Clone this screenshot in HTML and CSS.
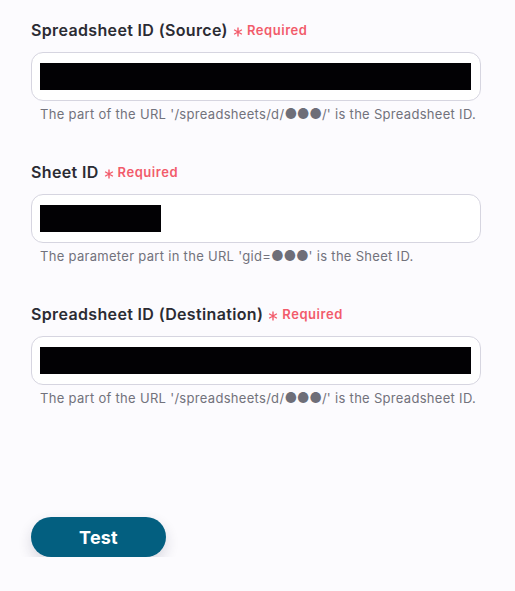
FILE: index.html
```html
<!DOCTYPE html>
<html lang="en">
<head>
<meta charset="utf-8">
<link rel="stylesheet" href="styles.css">
</head>
<body>
<main class="form">
  <section class="field">
    <div class="label">Spreadsheet ID (Source) <span class="req"><svg class="star" viewBox="0 0 10 10"><path d="M5 0.5V9.5M1.1 2.75L8.9 7.25M1.1 7.25L8.9 2.75"/></svg>Required</span></div>
    <div class="input"><div class="redact redact-long"></div></div>
    <p class="help">The part of the URL '/spreadsheets/d/<span class="dots">●●●</span>/' is the Spreadsheet ID.</p>
  </section>
  <section class="field">
    <div class="label">Sheet ID <span class="req"><svg class="star" viewBox="0 0 10 10"><path d="M5 0.5V9.5M1.1 2.75L8.9 7.25M1.1 7.25L8.9 2.75"/></svg>Required</span></div>
    <div class="input"><div class="redact redact-short"></div></div>
    <p class="help">The parameter part in the URL 'gid=<span class="dots">●●●</span>' is the Sheet ID.</p>
  </section>
  <section class="field">
    <div class="label">Spreadsheet ID (Destination) <span class="req"><svg class="star" viewBox="0 0 10 10"><path d="M5 0.5V9.5M1.1 2.75L8.9 7.25M1.1 7.25L8.9 2.75"/></svg>Required</span></div>
    <div class="input"><div class="redact redact-long"></div></div>
    <p class="help">The part of the URL '/spreadsheets/d/<span class="dots">●●●</span>/' is the Spreadsheet ID.</p>
  </section>
  <div class="actions">
    <button class="btn">Test</button>
  </div>
</main>
</body>
</html>
```
FILE: styles.css
```css
html, body {
  margin: 0;
  padding: 0;
  background: #fcfbfe;
}
body {
  font-family: Inter, "Noto Sans", sans-serif;
  color: #2b2b33;
}
.form {
  padding: 19px 0 0 31px;
  width: 450px;
  display: flex;
  flex-direction: column;
}
.field {
  display: flex;
  flex-direction: column;
  margin-bottom: 38px;
}
.label {
  font-size: 16px;
  font-weight: 600;
  letter-spacing: 0.35px;
  line-height: 22px;
  height: 22px;
  display: flex;
  align-items: center;
  gap: 5px;
  white-space: nowrap;
}
.req {
  color: #f25b6b;
  font-size: 13px;
  font-weight: 600;
  letter-spacing: 0.55px;
  display: inline-flex;
  align-items: center;
  gap: 4px;
}
.star {
  width: 10px;
  height: 10px;
  position: relative;
  top: 2px;
  fill: none;
  stroke: #f25b6b;
  stroke-width: 1.4;
}
.input {
  margin-top: 11px;
  height: 49px;
  box-sizing: border-box;
  border: 1px solid #d6d5e0;
  border-radius: 12px;
  background: #fff;
  padding: 10px 9px 0 8px;
}
.redact {
  height: 27px;
  background: #020104;
}
.redact-long { width: 431px; }
.redact-short { width: 121px; }
.help {
  margin: 4px 0 0 9px;
  font-size: 13px;
  line-height: 18px;
  color: #72727c;
  letter-spacing: 0.3px;
  white-space: nowrap;
}
.dots {
  color: #6e6e78;
  font-size: 14px;
  line-height: 0;
  letter-spacing: -0.3px;
}
.actions {
  margin-top: 72px;
}
.btn {
  width: 135px;
  height: 40px;
  border: none;
  border-radius: 20px;
  background: #035f80;
  color: #fff;
  font-family: Inter, Roboto, sans-serif;
  font-size: 18px;
  font-weight: 700;
  letter-spacing: 0.2px;
  box-shadow: 0 6px 14px rgba(30, 30, 60, 0.16);
  cursor: pointer;
}
```
